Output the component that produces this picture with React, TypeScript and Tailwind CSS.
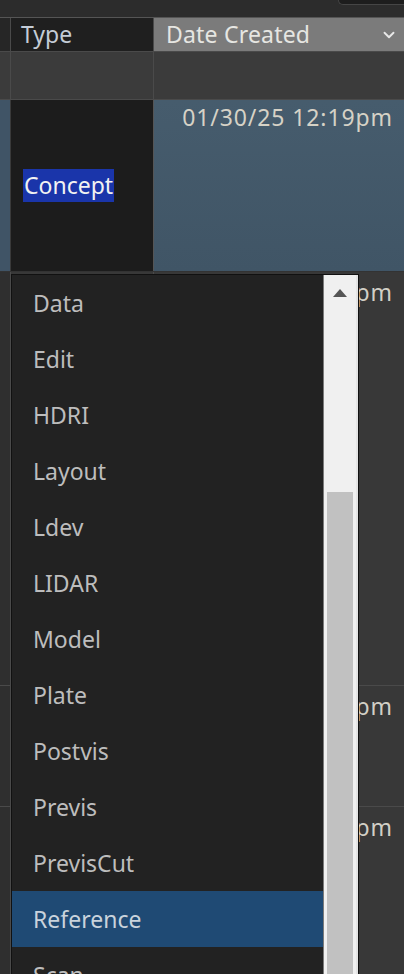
import { ChevronDown } from "lucide-react";

const ITEMS = [
  "Data",
  "Edit",
  "HDRI",
  "Layout",
  "Ldev",
  "LIDAR",
  "Model",
  "Plate",
  "Postvis",
  "Previs",
  "PrevisCut",
  "Reference",
  "Scan",
];

const FONT = { fontFamily: '"Noto Sans", "Open Sans", sans-serif' };

function BackRow({ h, date }: { h: string; date: string }) {
  return (
    <div className={`flex ${h} border-b border-[#4a4a4a] bg-[#383838]`}>
      <div className="w-[11px] shrink-0 border-r border-[#4a4a4a] bg-[#2f2f2f]" />
      <div className="w-[143px] shrink-0 border-r border-[#4a4a4a]" />
      <div className="flex-1 pr-[11px] pt-[5px] text-right text-[23px] leading-[30px] tracking-[0.9px] text-[#d2cfc6]">
        {date}
      </div>
    </div>
  );
}

export default function App() {
  return (
    <div
      className="relative h-[974px] w-[404px] overflow-hidden bg-[#383838]"
      style={FONT}
    >
      {/* top strip */}
      <div className="flex h-[18px] justify-end border-b border-[#555] bg-[#2c2c2c]">
        <div className="h-[5px] w-[66px] rounded-bl-[8px] border-b border-l border-[#454545] bg-[#1d1d1d]" />
      </div>

      {/* header */}
      <div className="flex h-[34px] border-b border-[#4a4a4a]">
        <div className="w-[11px] shrink-0 border-r border-[#4a4a4a] bg-[#262626]" />
        <div className="flex w-[143px] shrink-0 items-center border-r border-[#4a4a4a] bg-[#1f1f1f] pl-[10px] text-[23px] text-[#c4ccd6]">
          Type
        </div>
        <div className="flex flex-1 items-center justify-between bg-[#7b7b7b] pl-[12px] pr-[6px] text-[23px] tracking-[0.2px] text-[#e6e6e2]">
          <span>Date Created</span>
          <ChevronDown className="h-[18px] w-[18px] text-[#e8e8e8]" strokeWidth={2.5} />
        </div>
      </div>

      {/* filter row */}
      <div className="flex h-[48px] border-b border-[#4a4a4a] bg-[#3b3b3b]">
        <div className="w-[11px] shrink-0 border-r border-[#4a4a4a]" />
        <div className="w-[143px] shrink-0 border-r border-[#4a4a4a]" />
        <div className="flex-1" />
      </div>

      {/* selected row */}
      <div className="flex h-[172px] border-b border-[#333]">
        <div className="w-[11px] shrink-0 border-r border-[#3a3a3a] bg-[#405466]" />
        <div className="flex w-[143px] shrink-0 items-center border-r border-[#555] bg-[#1c1c1c] pl-[12px]">
          <span className="bg-[#1a35aa] px-[1px] text-[23px] leading-[33px] text-[#f2f2f2]">
            Concept
          </span>
        </div>
        <div className="flex-1 bg-gradient-to-b from-[#465c6d] to-[#405566] pr-[11px] pt-[2px] text-right text-[23px] leading-[30px] tracking-[0.9px] text-[#d6d2c6]">
          01/30/25 12:19pm
        </div>
      </div>

      <BackRow h="h-[414px]" date="01/30/25 12:19pm" />
      <BackRow h="h-[121px]" date="01/30/25 12:19pm" />
      <BackRow h="h-[200px]" date="01/30/25 12:19pm" />

      {/* dropdown popup */}
      <div className="absolute left-[11px] top-[274px] flex h-[760px] w-[348px] border border-[#111] bg-[#222]">
        <div className="flex-1">
          {ITEMS.map((item) => (
            <div
              key={item}
              className={`flex h-[56px] items-center pl-[21px] text-[23px] ${
                item === "Reference"
                  ? "bg-[#1f4a74] text-[#c9d3dc]"
                  : "text-[#bdbdbd]"
              }`}
            >
              {item}
            </div>
          ))}
        </div>
        <div className="flex w-[35px] shrink-0 flex-col border-l border-[#7a7a7a] border-r-2 border-r-[#e4e4e4] bg-[#f0f0f0]">
          <div className="flex h-[217px] justify-center pt-[14px]">
            <svg width="14" height="8" viewBox="0 0 14 8">
              <polygon points="7,0 14,8 0,8" fill="#555" />
            </svg>
          </div>
          <div className="mx-[3px] flex-1 bg-[#c1c1c1]" />
        </div>
      </div>
    </div>
  );
}
